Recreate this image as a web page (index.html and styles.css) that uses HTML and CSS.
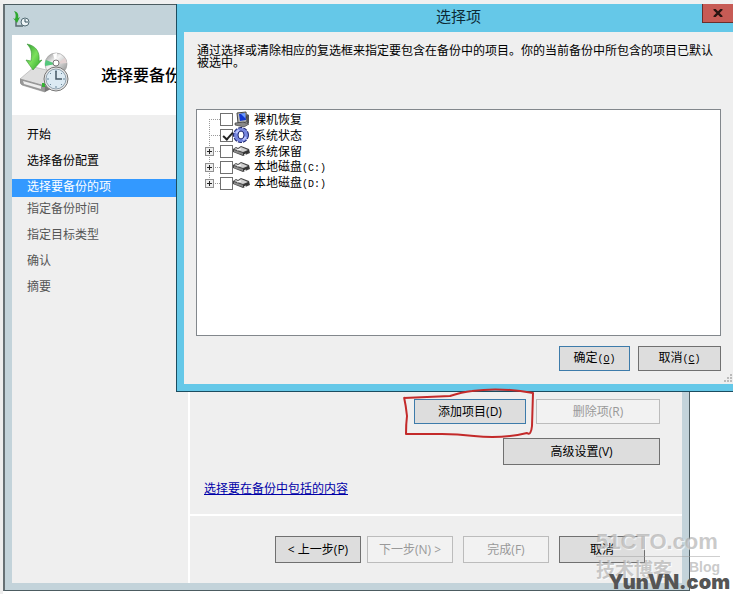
FILE: index.html
```html
<!DOCTYPE html>
<html lang="zh-CN">
<head>
    <meta charset="UTF-8">
    <meta name="viewport" content="width=device-width, initial-scale=1.0">
    <title>选择要备份的项</title>
    <link rel="stylesheet" href="styles.css">
</head>
<body>
    <!-- Shared icons -->
    <svg class="defs" width="0" height="0" aria-hidden="true">
        <defs>
            <linearGradient id="green" x1="0" y1="0" x2="1" y2="1">
                <stop offset="0" stop-color="#2f9a32"/>
                <stop offset=".5" stop-color="#7be05c"/>
                <stop offset="1" stop-color="#23a021"/>
            </linearGradient>
            <linearGradient id="metal" x1="0" y1="0" x2="1" y2="1">
                <stop offset="0" stop-color="#8d8d8d"/>
                <stop offset=".4" stop-color="#f4f4f4"/>
                <stop offset="1" stop-color="#858585"/>
            </linearGradient>
            <symbol id="drive" viewBox="0 0 17 16">
                <path d="M0 6L3 4l2 1 3-2 8 3 1 4-7 3L0 9z" fill="#444"/>
                <path d="M1 6l2-1 2 1 3-2 7 3-5 2z" fill="#d0d0d0"/>
                <path d="M1 7l9 3v2L1 9z" fill="#8a8a8a"/>
                <path d="M10 10l6-3v2l-6 3z" fill="#333"/>
                <path d="M4 7l4-1M11 12l2-1" stroke="#fff"/>
            </symbol>
        </defs>
    </svg>

    <div class="wizard">
        <div class="wizard-title">
            <svg width="17" height="17" viewBox="0 0 17 17">
                <path d="M3 10v5h7" fill="none" stroke="#596b70" stroke-width="1.5"/>
                <path d="M1 0c4 1 5 4 4 7l2-1-3 6-4-5 2 1c1-3 1-5-1-8z" fill="#2fa72f"/>
                <circle cx="12" cy="11" r="4" fill="#eef5f7" stroke="#516a73"/>
                <path d="M12 8v3h3" fill="none" stroke="#34505c"/>
            </svg>
        </div>
        <div class="wizard-header">
            <svg width="50" height="50" viewBox="0 0 50 50">
                <circle cx="36" cy="21" r="11" fill="url(#metal)" stroke="#999" stroke-width=".6"/>
                <path d="M36 21L26 17a11 11 0 0 0-1 6z" fill="#54c77c"/>
                <path d="M36 21l9-6 2 5z" fill="#e3d3d3"/>
                <path d="M36 21l-3-10 4-1z" fill="#fff"/>
                <circle cx="36" cy="20" r="3" fill="#fff" stroke="#777"/>
                <path d="M0 36l14-12 21 5-10 14z" fill="#dedede" stroke="#aaa" stroke-width=".6"/>
                <path d="M0 36l25 7v6L2 42q-3-2-2-6z" fill="#999" stroke="#888" stroke-width=".6"/>
                <path d="M3 38l18 5v3L4 41z" fill="#eee"/>
                <path d="M25 43l6-8v11l-6 3z" fill="#777"/>
                <rect x="22" y="40" width="3" height="4" fill="#35b334"/>
                <path d="M7 1c10 2 13 9 12 17l3-1-9 10L6 17l5 1c1-7 1-12-4-17z" fill="url(#green)" stroke="#3a9736" stroke-width=".6"/>
                <circle cx="36" cy="36" r="12" fill="#e7e7e7" stroke="#777"/>
                <circle cx="36" cy="36" r="10" fill="#dceaf3" stroke="#8fa1ae"/>
                <path d="M36 27v2M36 43v2M27 36h2M43 36h2M30 30l1 1M42 42l-1-1M30 42l1-1M42 30l-1 1" stroke="#68879a"/>
                <path d="M36 28v8h6" fill="none" stroke="#445866" stroke-width="1.5"/>
            </svg>
            <h1>选择要备份</h1>
        </div>
        <div class="wizard-body">
            <ul class="steps">
                <li>开始</li>
                <li>选择备份配置</li>
                <li class="current">选择要备份的项</li>
                <li class="pending">指定备份时间</li>
                <li class="pending">指定目标类型</li>
                <li class="pending">确认</li>
                <li class="pending">摘要</li>
            </ul>
            <div class="page">
                <div class="page-content">
                    <div class="item-buttons">
                        <div class="marked">
                            <button class="btn add default" type="button">添加项目(D)</button>
                            <svg class="scribble" width="134" height="52" viewBox="0 0 134 52">
                                <path d="M2 10L48 8Q60 4 70 3Q98-1 131 5L130 38Q129 48 125 45Q100 51 72 48Q55 46 40 46L4 46Q4 36 5 28Q4 18 2 9" fill="none" stroke="#c32a2a" stroke-width="2" stroke-linejoin="round"/>
                            </svg>
                        </div>
                        <button class="btn remove" type="button" disabled>删除项(R)</button>
                    </div>
                    <button class="btn advanced" type="button">高级设置(V)</button>
                    <a href="#">选择要在备份中包括的内容</a>
                </div>
                <div class="page-footer">
                    <button class="btn" type="button">&lt; 上一步(P)</button>
                    <button class="btn next" type="button" disabled>下一步(N) &gt;</button>
                    <button class="btn" type="button" disabled>完成(F)</button>
                    <button class="btn" type="button">取消</button>
                </div>
            </div>
        </div>
    </div>

    <div class="dialog" role="dialog" aria-labelledby="dialog-title">
        <div class="dialog-title">
            <h2 id="dialog-title">选择项</h2>
            <button class="close" type="button" aria-label="关闭">
                <svg width="10" height="8" viewBox="0 0 10 8"><path d="M1 0l8 8M9 0L1 8" stroke="#2b1512" stroke-width="2.4"/></svg>
            </button>
        </div>
        <div class="dialog-body">
            <p>通过选择或清除相应的复选框来指定要包含在备份中的项目。你的当前备份中所包含的项目已默认被选中。</p>
            <ul class="tree">
                <li>
                    <span class="branch first"></span>
                    <input type="checkbox" id="bare">
                    <svg width="17" height="16" viewBox="0 0 17 16">
                        <path d="M4 2l9-1 1 10-9 1z" fill="#b9b9b9" stroke="#444"/>
                        <path d="M6 3l6-1 1 7-6 1z" fill="#1238d0"/>
                        <path d="M8 3l4 4V2z" fill="#6b9cff"/>
                        <path d="M2 12l8-1 6 2-5 3-9-2z" fill="#888" stroke="#333" stroke-width=".6"/>
                        <path d="M14 3l2 1v8l-2 1z" fill="#555"/>
                    </svg>
                    <label for="bare">裸机恢复</label>
                </li>
                <li>
                    <span class="branch"></span>
                    <input type="checkbox" id="state" checked>
                    <svg width="17" height="16" viewBox="0 0 17 16">
                        <circle cx="8" cy="8" r="7" fill="none" stroke="#1c246e" stroke-width="2" stroke-dasharray="4 1"/>
                        <circle cx="8" cy="8" r="5" fill="none" stroke="#7686de" stroke-width="4"/>
                        <path d="M3 6l3-3M10 13l3-3" stroke="#b9c4ff" stroke-width="2"/>
                        <ellipse cx="8" cy="8" rx="3" ry="4" fill="#fff" stroke="#1c246e"/>
                    </svg>
                    <label for="state">系统状态</label>
                </li>
                <li>
                    <span class="branch"><button type="button" aria-label="展开"></button></span>
                    <input type="checkbox" id="reserved">
                    <svg width="17" height="16"><use href="#drive"/></svg>
                    <label for="reserved">系统保留</label>
                </li>
                <li>
                    <span class="branch"><button type="button" aria-label="展开"></button></span>
                    <input type="checkbox" id="disk-c">
                    <svg width="17" height="16"><use href="#drive"/></svg>
                    <label for="disk-c">本地磁盘<span class="half">(C:)</span></label>
                </li>
                <li>
                    <span class="branch last"><button type="button" aria-label="展开"></button></span>
                    <input type="checkbox" id="disk-d">
                    <svg width="17" height="16"><use href="#drive"/></svg>
                    <label for="disk-d">本地磁盘<span class="half">(D:)</span></label>
                </li>
            </ul>
            <div class="dialog-buttons">
                <button class="btn ok default" type="button">确定<span class="half">(<u>O</u>)</span></button>
                <button class="btn cancel" type="button">取消<span class="half">(<u>C</u>)</span></button>
            </div>
            <svg class="grip" width="9" height="9" viewBox="0 0 9 9"><path d="M6 0h2v2H6zM3 3h2v2H3zM6 3h2v2H6zM0 6h2v2H0zM3 6h2v2H3zM6 6h2v2H6z" fill="#bbb"/></svg>
        </div>
    </div>

    <div class="watermark">
        <div class="site">51CTO.com</div>
        <div class="sub"><span>技术博客</span><span class="blog">Blog</span></div>
    </div>
    <div class="stamp">YunVN.com</div>
</body>
</html>
```

FILE: styles.css
```css
* {
    box-sizing: border-box;
}
body {
    margin: 0;
    height: 100vh;
    overflow: hidden;
    position: relative;
    border-top: 4px solid #f0f0f0;
    border-left: 3px solid #eee;
    background: #fff;
    color: #000;
    font: 12px/16px "Open Sans", "Noto Sans CJK SC", sans-serif;
}
ul {
    list-style: none;
    margin: 0;
    padding: 0;
}
h1, h2, p {
    margin: 0;
}
.defs {
    position: absolute;
}

/* buttons */
.btn {
    height: 27px;
    width: 86px;
    padding: 0;
    border: 1px solid #707070;
    background: #ddd;
    color: #000;
    font: inherit;
    white-space: nowrap;
}
.btn.default {
    border-color: #3d7baa;
}
.btn:disabled {
    border-color: #bcbcbc;
    background: #f2f2f2;
    color: #999;
}

/* wizard window */
.wizard {
    display: flex;
    flex-direction: column;
    height: calc(100vh - 7px);
    margin-right: 43px;
    padding: 0 7px 7px;
    border: 1px solid #4c5c61;
    border-left: 2px solid #667074;
    background: #c3d3da;
}
.wizard-title {
    height: 30px;
    padding: 6px 0 0 1px;
}
.wizard-header {
    display: flex;
    align-items: center;
    gap: 31px;
    height: 80px;
    padding: 0 0 14px 8px;
    background: #fff;
}
.wizard-header svg {
    flex: none;
}
.wizard-header h1 {
    padding-top: 14px;
    font-size: 16px;
    line-height: 20px;
    font-weight: 500;
    white-space: nowrap;
}
.wizard-body {
    display: flex;
    flex: 1;
    background: #efefef;
}
.steps {
    width: 178px;
    flex: none;
    padding-top: 12px;
    border-right: 2px solid #fff;
}
.steps li {
    height: 18px;
    margin-bottom: 8px;
    padding-left: 15px;
}
.steps .current {
    margin-bottom: 4px;
    background: #3399ff;
    color: #fff;
}
.steps .pending {
    color: #555;
}
.page {
    display: flex;
    flex: 1;
    flex-direction: column;
    justify-content: flex-end;
}
.page-content {
    display: flex;
    flex-direction: column;
    align-items: flex-end;
    gap: 14px;
    padding: 0 22px 17px 14px;
}
.page-content a {
    align-self: flex-start;
    margin-top: 2px;
    color: #0000a8;
}
.item-buttons {
    display: flex;
    gap: 10px;
}
.item-buttons .btn {
    height: 25px;
}
.marked {
    position: relative;
}
.scribble {
    position: absolute;
    left: -12px;
    top: -11px;
    z-index: 2;
    pointer-events: none;
}
.add {
    width: 112px;
}
.remove {
    width: 124px;
}
.advanced {
    width: 157px;
}
.page-footer {
    display: flex;
    justify-content: flex-end;
    gap: 10px;
    padding: 20px 37px 20px 0;
    border-top: 2px solid #fff;
}
.page-footer .next {
    margin-left: -4px;
}

/* dialog over the wizard */
.dialog {
    position: absolute;
    left: 173px;
    right: 0;
    top: -3px;
    z-index: 1;
    padding: 0 0 7px 7px;
    border: 1px solid #1c4d60;
    border-right: 0;
    background: #65c8e8;
}
.dialog-title {
    display: flex;
    justify-content: center;
    height: 30px;
    position: relative;
}
.dialog-title h2 {
    font-size: 15px;
    line-height: 28px;
    font-weight: 400;
    color: #0c2a36;
}
.close {
    position: absolute;
    right: 0;
    top: 0;
    width: 31px;
    height: 21px;
    padding: 0;
    border: 1px solid #6b2f2c;
    border-width: 0 0 1px 1px;
    background: #c75b55;
}
.dialog-body {
    position: relative;
    padding: 13px 12px;
    background: #efefef;
}
.dialog-body p {
    height: 64px;
    padding-left: 1px;
    line-height: 12px;
}
.half {
    font-family: "Liberation Mono", monospace;
    font-size: 10px;
}
.tree {
    height: 227px;
    padding: 1px 8px;
    border: 1px solid #82878c;
    background: #fff;
}
.tree li {
    display: flex;
    align-items: center;
    height: 16px;
}
.tree svg {
    flex: none;
}
.tree label {
    padding: 1px 0 0 4px;
}
.branch {
    width: 15px;
    height: 16px;
    flex: none;
    display: flex;
    align-items: center;
    background:
        repeating-linear-gradient(#999 0 1px, transparent 1px 2px) 4px 0 / 1px 100% no-repeat,
        repeating-linear-gradient(90deg, #999 0 1px, transparent 1px 2px) 4px 8px / 11px 1px no-repeat;
}
.branch.first {
    background-position: 4px 8px, 4px 8px;
}
.branch.last {
    background-size: 1px 8px, 11px 1px;
}
.branch button {
    width: 9px;
    height: 9px;
    padding: 0;
    border: 1px solid #919191;
    background:
        linear-gradient(#222, #222) center / 5px 1px no-repeat,
        linear-gradient(#222, #222) center / 1px 5px no-repeat,
        #eee;
}
.tree input {
    appearance: none;
    width: 13px;
    height: 13px;
    margin: 0;
    flex: none;
    border: 1px solid #707070;
    background: #fff;
}
.tree input:checked::before {
    content: "";
    display: block;
    width: 4px;
    height: 8px;
    margin: 0 0 0 4px;
    border: solid #222;
    border-width: 0 2px 2px 0;
    transform: rotate(42deg);
}
.dialog-buttons {
    display: flex;
    justify-content: flex-end;
    gap: 8px;
    padding-top: 10px;
}
.dialog-buttons .btn {
    height: 25px;
}
.ok {
    width: 71px;
}
.cancel {
    width: 83px;
}
.grip {
    position: absolute;
    right: 0;
    bottom: 1px;
}

/* watermarks lie over everything */
.watermark {
    position: absolute;
    right: 13px;
    bottom: 11px;
    z-index: 3;
    width: 124px;
    color: rgba(150, 150, 150, 0.5);
    font-weight: 700;
    text-shadow: 1px 1px 1px rgba(255, 255, 255, 0.8);
    pointer-events: none;
}
.site {
    font-family: "Liberation Sans", sans-serif;
    font-size: 22px;
    line-height: 28px;
}
.sub {
    display: flex;
    justify-content: space-between;
    border-top: 1px solid rgba(160, 160, 160, 0.5);
    font-size: 19px;
    line-height: 26px;
}
.blog {
    font-family: "Liberation Sans", sans-serif;
    font-size: 14px;
    line-height: 20px;
}
.stamp {
    position: absolute;
    right: 3px;
    bottom: 1px;
    z-index: 4;
    color: #555;
    font: 900 20px/22px Inter, "DejaVu Sans", sans-serif;
    pointer-events: none;
}
```
